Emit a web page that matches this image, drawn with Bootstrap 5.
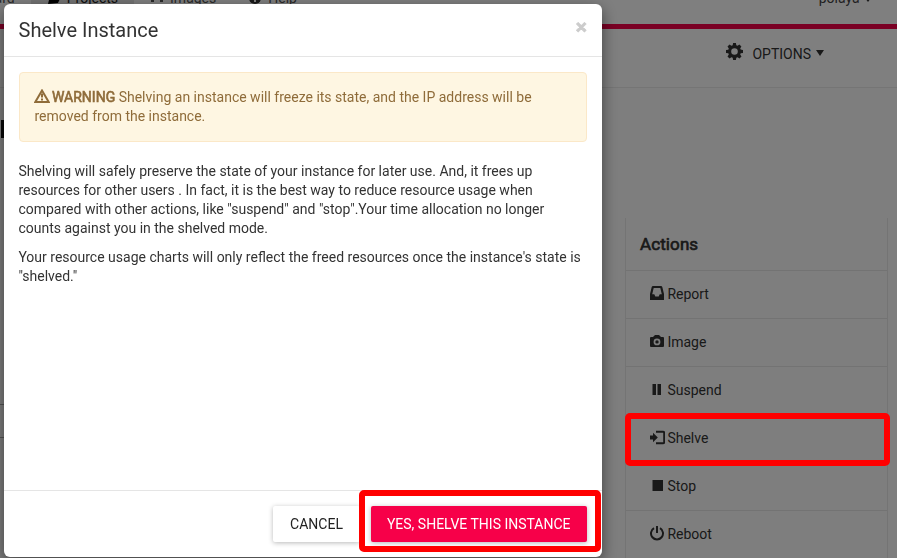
<!DOCTYPE html>
<html lang="en">
<head>
<meta charset="utf-8">
<meta name="viewport" content="width=device-width, initial-scale=1">
<title>Shelve Instance</title>
<link href="https://cdn.jsdelivr.net/npm/bootstrap@5.3.0/dist/css/bootstrap.min.css" rel="stylesheet">
<style>
body{font:14px/19px Roboto,"Liberation Sans",sans-serif;color:#333;background:#fff;height:558px;overflow:hidden}
.topbar{height:29px;border-bottom:5px solid #f50049;background:#fff;overflow:hidden;align-items:flex-start}
.topbar .nav{height:24px;flex-wrap:nowrap;margin-left:-69px}
.topbar .nav-link{color:#555;padding:0 16px;height:24px;line-height:19px;white-space:nowrap;display:flex}
.topbar .nav-link span{margin-top:-11px}
.topbar .nav-link svg{margin:-8px 4px 0 0}
.topbar .nav-link.active{background:#e7e7e7;color:#222}
.user{margin:-11px 26px 0 0;color:#444}
.tri{display:inline-block;border:4.5px solid transparent;border-top:6px solid #333;border-bottom:0}
.user .tri{border-width:4px 3px 0;vertical-align:1px;margin-left:2px}
.subbar{height:59px;border-bottom:1px solid #eaeaea;padding:0 73px 8px 0}
.subbar svg{margin:-5px 9px 0 0}
.subbar .tri{margin:-2px 0 0 5px}
.main-area{background:#fdfdfd;height:470px;padding:130px 9px 0 0}
.actions{width:263px;border:1px solid #e9e9e9;border-width:0 1px;--bs-list-group-bg:transparent}
.actions h2{font-size:17px;font-weight:400;-webkit-text-stroke:.65px #333;height:52px;flex:none;padding:16px 14px 0;margin:0;line-height:20px;letter-spacing:.1px}
.actions .list-group-item{height:48px;flex:none;border:0;border-top:1px solid #e7e7e7;padding:0 0 0 24px;color:#333;background:transparent}
.actions svg{width:15px;height:15px;margin:-2px 2.4px 0 0;flex:none}
.actions svg,.subbar svg{fill:#333}
.modal-backdrop{--bs-backdrop-opacity:.5}
.modal-dialog{width:598px;max-width:none;margin:4px 0 0 4px}
.modal-content{height:553px;border:0;border-radius:6px;box-shadow:0 5px 15px rgba(0,0,0,.5);color:#333}
.modal-header{height:53px;padding:0 15px 0 14.5px;border-color:#e5e5e5}
.modal-title{font-size:20px;font-weight:400;line-height:24px}
.close-x{font-size:21px;font-weight:700;-webkit-text-stroke:.7px #ccc;line-height:20px;color:#ccc;background:none;border:0;padding:0;margin-top:-6px}
.modal-body{padding:15px}
.modal-body p{margin:0 0 10px -.6px}
.warn{height:70px;padding:15px 15px 15px 14.5px;margin:0 0 20px;background:#fef6e2;border:1px solid #fbe8c8;color:#8f6c3a;border-radius:4px}
.warn strong{font-weight:400;-webkit-text-stroke:.6px #8f6c3a}
.warn svg{margin:-2px -1px 0 -1px;vertical-align:-1px}
.modal-footer{height:67px;padding:0 15px;gap:11px;border-color:#e5e5e5}
.modal-footer>*{margin:0}
.act{height:36px;font-size:14px;line-height:20px;padding:0 16px;border:0;border-radius:2px;box-shadow:0 1px 5px rgba(0,0,0,.28);background:#fff;color:#222;white-space:nowrap}
.act.go{background:#f70049;color:#fff;width:216px;padding:0 16px 0 15.5px}
.act.quit{width:87px}
.focus-box{position:absolute;z-index:1100;border:6px solid #f00;border-radius:5px}
.fb-menu{left:625px;top:413px;width:265px;height:53px}
.fb-btn{left:359px;top:490px;width:242px;height:62px}
.stub{position:absolute;left:1px;top:120px;width:4px;height:18px;background:#111}
.rule{position:absolute;left:0;width:5px;height:1px;background:#aaa}
</style>
</head>
<body>
<nav class="topbar d-flex justify-content-between">
 <div class="nav">
  <a class="nav-link"><span>Dashboard</span></a>
  <a class="nav-link active"><svg width="16" height="12" viewBox="0 0 16 12"><path d="M4 0h12l-5 11-10 1z"/></svg><span>Projects</span></a>
  <a class="nav-link"><svg width="16" height="12" viewBox="0 0 16 12"><path d="M1 0h3v10H1zM10 0h3v10h-3z" fill="#555"/></svg><span>Images</span></a>
  <a class="nav-link"><svg width="16" height="12" viewBox="0 0 16 12"><circle cx="7" cy="6" r="6" fill="#333"/><path d="M6 7h2v3H6z" fill="#fff"/></svg><span>Help</span></a>
 </div>
 <div class="user">polaya <i class="tri"></i></div>
</nav>
<div class="subbar d-flex align-items-center justify-content-end">
 <svg width="17" height="17" viewBox="0 0 17 17"><path fill-rule="evenodd" d="M7.1 0h2.8l.4 2.2 1.2.5L13.4 1.5l2 2-1.2 1.9.5 1.2 2.3.5v2.8l-2.3.4-.5 1.2 1.3 1.9-2 2-1.9-1.2-1.3.5-.4 2.3H7.1l-.4-2.3-1.3-.5-1.9 1.3-2-2 1.3-2-.5-1.2L0 9.9V7.1l2.3-.4.5-1.3-1.3-1.9 2-2 1.9 1.3 1.3-.5zM8.5 5.2a3.3 3.3 0 1 0 0 6.6 3.3 3.3 0 0 0 0-6.6z"/></svg>
 <span class="opt">OPTIONS</span> <i class="tri big"></i>
</div>
<main class="main-area d-flex justify-content-end">
 <div class="actions list-group rounded-0">
  <h2>Actions</h2>
  <a class="list-group-item d-flex align-items-center"><svg viewBox="0 0 15 15"><path fill-rule="evenodd" d="M3 0h8q1 0 1.3 1L14 8v6H0V8l1.7-7Q2 0 3 0zm.7 2L2.2 8.2h2.1l1 2.3h3.4l1-2.3h2.1L10.3 2z"/></svg>Report</a>
  <a class="list-group-item d-flex align-items-center"><svg viewBox="0 0 15 15"><path fill-rule="evenodd" d="M5 1h4l2 2h2q1 0 1 1v8q0 1-1 1H1q-1 0-1-1V4q0-1 1-1h2zm2 3.5a3.4 3.4 0 1 0 0 6.8 3.4 3.4 0 0 0 0-6.8zm0 1.7a1.7 1.7 0 1 1 0 3.4 1.7 1.7 0 0 1 0-3.4z"/></svg>Image</a>
  <a class="list-group-item d-flex align-items-center"><svg viewBox="0 0 15 15"><path d="M2.5 2H6v11H2.5zM7.5 2H11v11H7.5z"/></svg>Suspend</a>
  <a class="list-group-item d-flex align-items-center"><svg viewBox="0 0 15 15"><path d="M0 5.5h3V2.8L7.8 7.5 3 12.2V9.5H0z"/><path d="M6 1.7h7q1.2 0 1.2 1.2v9.2q0 1.2-1.2 1.2H6" fill="none" stroke="#333" stroke-width="2"/></svg>Shelve</a>
  <a class="list-group-item d-flex align-items-center"><svg viewBox="0 0 15 15"><path d="M2.5 2H13v11H2.5z"/></svg>Stop</a>
  <a class="list-group-item d-flex align-items-center"><svg viewBox="0 0 15 15"><path d="M4 2.2a6 6 0 1 0 6 0M7 0v7" fill="none" stroke="#333" stroke-width="2"/></svg>Reboot</a>
 </div>
</main>
<div class="stub"></div><div class="rule" style="top:404px"></div><div class="rule" style="top:437px"></div>
<div class="modal-backdrop show"></div>
<div class="modal d-block overflow-hidden" tabindex="-1">
 <div class="modal-dialog">
  <div class="modal-content">
   <div class="modal-header"><h1 class="modal-title">Shelve Instance</h1><button class="close-x" aria-label="Close">×</button></div>
   <div class="modal-body">
    <div class="warn"><svg width="16" height="14" viewBox="0 0 16 14"><path d="M8 1.5 14.7 13H1.3z" fill="none" stroke="#8f6c3a" stroke-width="2"/><path d="M7 4.5h2v4H7zM7 9.5h2v2H7z" fill="#8f6c3a"/></svg> <strong>WARNING</strong> Shelving an instance will freeze its state, and the IP address will be removed from the instance.</div>
    <p>Shelving will safely preserve the state of your instance for later use. And, it frees up resources for other users . In fact, it is the best way to reduce resource usage when compared with other actions, like "suspend" and "stop".Your time allocation no longer counts against you in the shelved mode.</p>
    <p>Your resource usage charts will only reflect the freed resources once the instance's state is "shelved."</p>
   </div>
   <div class="modal-footer flex-nowrap"><button class="act quit">CANCEL</button><button class="act go">YES, SHELVE THIS INSTANCE</button></div>
  </div>
 </div>
</div>
<div class="focus-box fb-menu"></div>
<div class="focus-box fb-btn"></div>
<script src="https://cdn.jsdelivr.net/npm/bootstrap@5.3.0/dist/js/bootstrap.bundle.min.js"></script>
</body>
</html>
